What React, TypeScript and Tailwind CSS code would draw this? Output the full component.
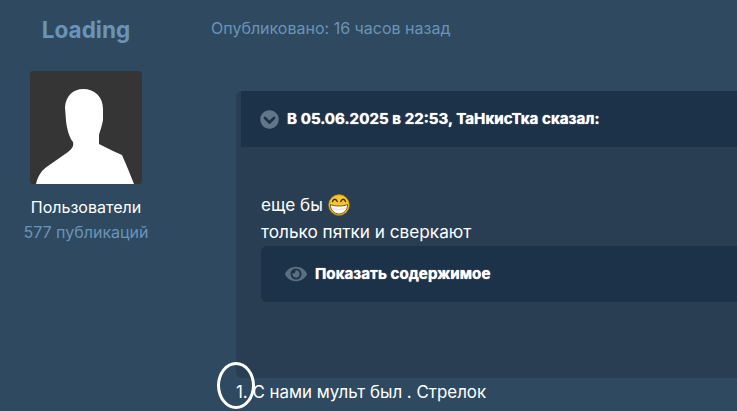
import { FaChevronCircleDown, FaEye } from 'react-icons/fa';

function Avatar() {
  return (
    <div className="w-[112px] h-[113px] rounded-[3px] bg-[#353535] overflow-hidden">
      <svg viewBox="0 0 112 113" className="w-full h-full">
        <path
          fill="#fff"
          d="M6 113C8 104 12 99 18 95L38 81C42 78 44 75 43 71C39 66 37 58 36 50L35 36C36 24 44 18 53 18C65 18 73 26 73 38L73 49C72 55 70 60 69 64L69 73L83 80L92 84L98 98L104 113Z"
        />
      </svg>
    </div>
  );
}

function Grin() {
  return (
    <svg viewBox="0 0 22 22" className="w-[22px] h-[22px] ml-[5px]">
      <circle cx="11" cy="11" r="10.4" fill="#f8c62c" stroke="#b07a10" strokeWidth="0.7" />
      <path d="M2.5 10.5C6 12.5 16 12.5 19.5 10.5C20 16 15.5 20 11 20C6.5 20 2 16 2.5 10.5Z" fill="#fff" stroke="#6b4a0c" strokeWidth="0.9" />
      <path d="M4.5 14.5C8 15.5 14 15.5 17.5 14.5" fill="none" stroke="#c9c9c9" strokeWidth="0.7" />
      <path d="M4.5 7.5C5.5 4.5 8 4.5 9.2 7.5M12.8 7.5C14 4.5 16.5 4.5 17.5 7.5" fill="none" stroke="#3f2e08" strokeWidth="1.4" strokeLinecap="round" />
    </svg>
  );
}

export default function App() {
  return (
    <div className="relative w-[737px] h-[411px] overflow-hidden bg-[#2f4a60] flex font-['Inter',sans-serif] text-[16px] text-white">
      <aside className="w-[172px] shrink-0 flex flex-col items-center pt-[16px]">
        <div className="text-[22.5px] leading-[28px] font-bold text-[#6a93b8]">Loading</div>
        <div className="mt-[27px]">
          <Avatar />
        </div>
        <div className="mt-[13px] leading-[20px]">Пользователи</div>
        <div className="mt-[5px] leading-[20px] text-[#6a93b8]">577 публикаций</div>
      </aside>

      <main className="flex-1 min-w-0 pt-[18px] pl-[39px]">
        <div className="leading-[20px] text-[#6a93b8]">Опубликовано: 16 часов назад</div>

        <div className="mt-[53px] ml-[25px] h-[287px] bg-[#293e53] pl-[5px] rounded-l-[6px]">
          <div className="h-[56px] bg-[#1c3248] flex items-center pl-[19px] text-[15.2px] font-bold">
            <FaChevronCircleDown className="w-[19px] h-[19px] text-[#62768a]" />
            <span className="ml-[8px] [text-shadow:0_0_1px_#fff]">В 05.06.2025 в 22:53, ТаНкисТка сказал:</span>
          </div>
          <div className="pl-[20px] pt-[45px] text-[17.2px] leading-[26px]">
            <div className="flex items-center h-[26px]">
              еще бы
              <Grin />
            </div>
            <div className="mt-[1px]">только пятки и сверкают</div>
            <div className="mt-[1px] h-[56px] bg-[#1c3248] rounded-l-[6px] flex items-center pl-[24px] text-[15.2px] font-bold">
              <FaEye className="w-[22px] h-[22px] text-[#5a6f81]" />
              <span className="ml-[8px] [text-shadow:0_0_1px_#fff]">Показать содержимое</span>
            </div>
          </div>
        </div>

        <div className="mt-[3px] ml-[25px] leading-[22px] text-[16.9px]">1. С нами мульт был . Стрелок</div>
      </main>

      <div className="absolute left-[217px] top-[362px] w-[38px] h-[47px] rounded-[50%] border-[3px] border-white" />
    </div>
  );
}
